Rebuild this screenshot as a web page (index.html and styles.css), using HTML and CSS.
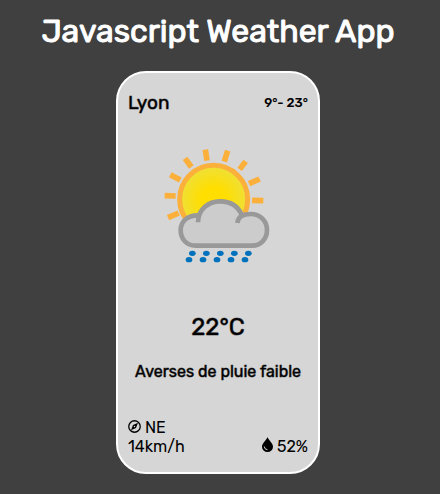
FILE: index.html
```html
<!DOCTYPE html>
<html lang="en">
<head>
<meta charset="utf-8">
<meta name="viewport" content="width=device-width, initial-scale=1">
<title>Javascript Weather App</title>
<link rel="stylesheet" href="styles.css">
</head>
<body>
<h1 class="title">Javascript Weather App</h1>
<main class="card" lang="fr">
  <header class="row">
    <h2 class="city">Lyon</h2>
    <p class="range">9°- 23°</p>
  </header>
  <svg class="weather" viewBox="3 0 372 390" aria-hidden="true">
    <defs>
      <radialGradient id="sun" cx="0.5" cy="0.5" r="0.5">
        <stop offset="0.35" stop-color="#ffde00"/>
        <stop offset="1" stop-color="#eee03a"/>
      </radialGradient>
    </defs>
    <circle cx="176" cy="178" r="102" fill="url(#sun)" stroke="#fbb03b" stroke-width="15"/>
    <g stroke="#fbb03b" stroke-width="17">
      <path d="M29 167L62 168M39 233L71 219M46 104L76 120M90 55L109 81M151 29L156 62M218 32L208 65M272 64L254 88M314 117L282 131M325 182L291 181"/>
    </g>
    <path d="M119 317C92 317 76 297 76 271C76 243 96 226 129 226C141 196 166 184 195 184C226 184 247 199 259 223C264 221 274 221 287 221C317 221 336 243 336 270C336 297 318 317 291 317Z" fill="#ccc"/>
    <g fill="none" stroke="#999" stroke-width="14">
      <path d="M128 226C97 226 77 244 77 271C77 297 95 317 121 317H291C318 317 336 296 336 270C336 243 316 222 287 222C263 222 249 230 247 249"/>
      <path d="M129 247C129 209 160 184 195 184C228 184 250 201 260 224"/>
    </g>
    <g fill="#0071bc">
      <ellipse cx="112" cy="340" rx="10" ry="8"/><ellipse cx="154" cy="340" rx="10" ry="8"/><ellipse cx="196" cy="340" rx="10" ry="8"/><ellipse cx="238" cy="340" rx="10" ry="8"/><ellipse cx="280" cy="340" rx="10" ry="8"/>
      <ellipse cx="102" cy="359" rx="10" ry="8"/><ellipse cx="144" cy="359" rx="10" ry="8"/><ellipse cx="186" cy="359" rx="10" ry="8"/><ellipse cx="228" cy="359" rx="10" ry="8"/><ellipse cx="270" cy="359" rx="10" ry="8"/>
    </g>
  </svg>
  <p class="temp">22°C</p>
  <p class="summary">Averses de pluie faible</p>
  <footer class="row details">
    <p>
      <svg class="compass" viewBox="0 0 26 26" aria-hidden="true"><circle cx="13" cy="13" r="11.5" fill="none" stroke="#000" stroke-width="2.6"/><path fill="#000" fill-rule="evenodd" d="M20 5.500L16 16L6 20.500L10 10ZM13 11.500A1.500 1.500 0 1 0 13 14.500A1.500 1.500 0 1 0 13 11.500Z"/></svg>
      NE<br>14km/h
    </p>
    <p>
      <svg class="drop" viewBox="0 0 22 30" aria-hidden="true"><path d="M11 0C12 5 22 12 22 19.500A11 10.500 0 0 1 0 19.500C0 12 10 5 11 0Z"/><path d="M4.500 19Q5 25 11 25.500" fill="none" stroke="#d6d6d6" stroke-width="2"/></svg>
      52%
    </p>
  </footer>
</main>
</body>
</html>
```
FILE: styles.css
```css
* {
  box-sizing: border-box;
}

body {
  margin: 0;
  min-height: 100vh;
  padding: 11px 20px 20px 16px;
  background: #404040;
  color: #000;
  font-family: Rubik, Roboto, "Liberation Sans", sans-serif;
  font-size: 16px;
  font-weight: 400;
  line-height: 19px;
}

h1, h2, p {
  margin: 0;
}

.title {
  color: #fff;
  font-size: 32px;
  font-weight: 400;
  line-height: 40px;
  text-align: center;
  -webkit-text-stroke: 1px currentColor;
}

.card {
  display: flex;
  flex-direction: column;
  align-items: center;
  width: 204px;
  margin: 20px auto 0;
  padding: 20px 10px 16px;
  border: 2px solid #fff;
  border-radius: 30px;
  background: #d6d6d6;
}

.row {
  display: flex;
  align-items: center;
  justify-content: space-between;
  width: 100%;
}

.city,
.temp,
.summary {
  font-weight: 400;
  -webkit-text-stroke: 1px rgb(0 0 0 / 50%);
}

.city {
  font-size: 19px;
}

.range {
  font-size: 13px;
  font-weight: 500;
}

.weather {
  width: 124px;
  height: 130px;
  margin-top: 28px;
}

.temp {
  margin-top: 42px;
  font-size: 24px;
  line-height: 30px;
}

.summary {
  margin-top: 20px;
}

.details {
  align-items: flex-end;
  margin-top: 37px;
}

.compass {
  width: 13px;
  height: 13px;
}

.drop {
  width: 11px;
  height: 15px;
}
```
